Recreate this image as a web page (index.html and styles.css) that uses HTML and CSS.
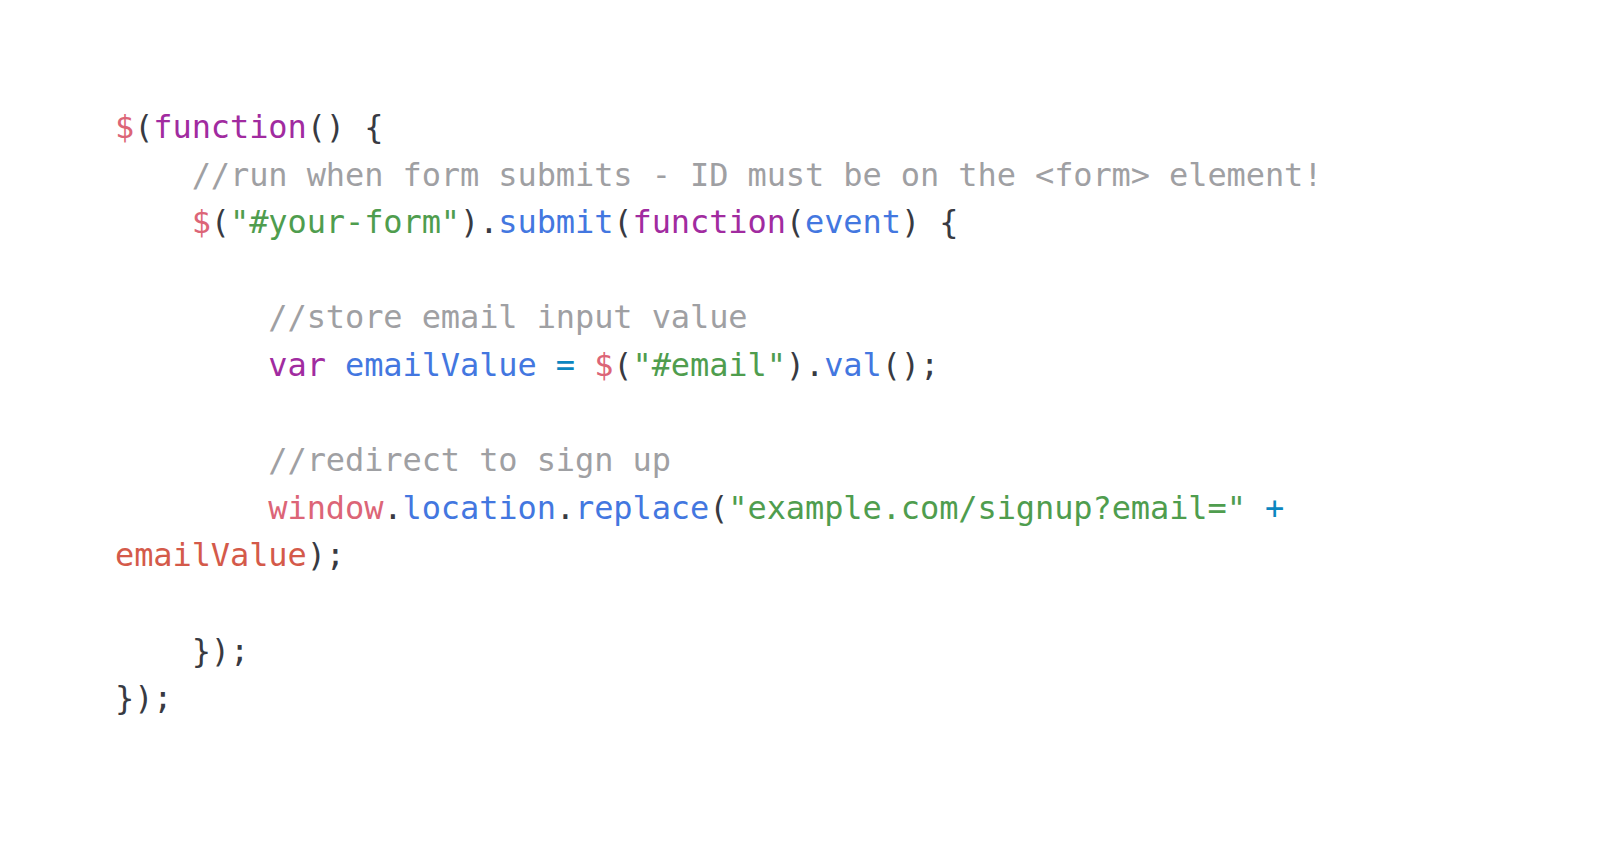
FILE: index.html
```html
<!DOCTYPE html>
<html>
<head>
<meta charset="utf-8">
<link rel="stylesheet" href="styles.css">
</head>
<body>
<main class="page">
<pre class="code"><span class="var">$</span>(<span class="kw">function</span>() {
    <span class="cm">//run when form submits - ID must be on the &lt;form&gt; element!</span>
    <span class="var">$</span>(<span class="str">"#your-form"</span>).<span class="fn">submit</span>(<span class="kw">function</span>(<span class="fn">event</span>) {

        <span class="cm">//store email input value</span>
        <span class="kw">var</span> <span class="fn">emailValue</span> <span class="op">=</span> <span class="var">$</span>(<span class="str">"#email"</span>).<span class="fn">val</span>();

        <span class="cm">//redirect to sign up</span>
        <span class="var">window</span>.<span class="fn">location</span>.<span class="fn">replace</span>(<span class="str">"example.com/signup?email="</span> <span class="op">+</span>
<span class="var2">emailValue</span>);

    });
});</pre>
</main>
</body>
</html>
```
FILE: styles.css
```css
html, body {
  margin: 0;
  padding: 0;
  background: #ffffff;
}

.page {
  padding: 104px 0 0 115px;
}

.code {
  margin: 0;
  font-family: "DejaVu Sans Mono", "Liberation Mono", monospace;
  font-size: 32px;
  line-height: 47.6px;
  color: #383a42;
  letter-spacing: -0.1px;
}

.kw { color: #a12ba0; }
.var { color: #dc6577; }
.var2 { color: #d45a4a; }
.str { color: #4f9d4e; }
.fn { color: #4377e0; }
.cm { color: #9fa0a3; }
.op { color: #0b86c0; }
```
